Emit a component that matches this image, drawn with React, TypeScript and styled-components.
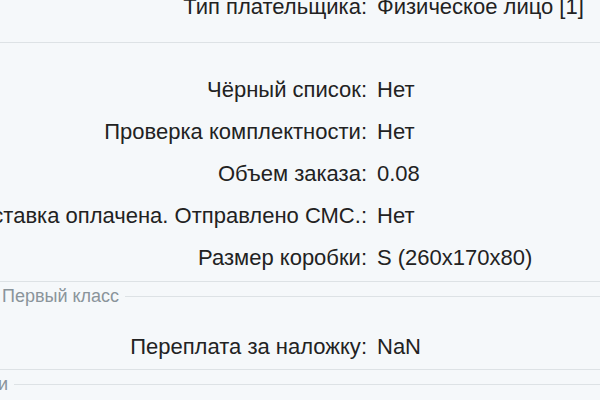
import React from 'react'
import styled, { createGlobalStyle } from 'styled-components'

const GlobalStyle = createGlobalStyle`
  html, body {
    margin: 0;
    padding: 0;
    background: #f5f8fa;
  }
  body {
    font-family: "Liberation Sans", Arial, sans-serif;
    color: #222;
  }
`

const Page = styled.div`
  width: 600px;
  height: 400px;
  overflow: hidden;
  background: #f5f8fa;
`

const Content = styled.div`
  margin-top: -14px;
`

const Section = styled.div<{ $top?: number; $bottom?: number }>`
  padding-top: ${(p) => p.$top ?? 0}px;
  padding-bottom: ${(p) => p.$bottom ?? 0}px;
  border-bottom: 1px solid #dde2e5;
`

const Row = styled.div`
  display: grid;
  grid-template-columns: 367px 1fr;
  column-gap: 10px;
  height: 42px;
  align-items: center;
  font-size: 22px;
`

const Label = styled.div`
  display: flex;
  justify-content: flex-end;
  white-space: nowrap;
  min-width: 0;
`

const Value = styled.div`
  white-space: nowrap;
`

const Legend = styled.div`
  display: flex;
  align-items: center;
  height: 28px;
  gap: 6px;
  font-size: 18px;
  color: #8a949a;
  white-space: nowrap;

  &::after {
    content: '';
    flex: 1;
    height: 1px;
    background: #dde2e5;
  }
`

const LegendText = styled.div<{ $clip?: number }>`
  display: flex;
  justify-content: flex-end;
  padding-left: 2px;
  ${(p) => (p.$clip ? `width: ${p.$clip}px; padding-left: 0;` : '')}
`

type Field = [string, string]

const Fields = ({ items }: { items: Field[] }) => (
  <>
    {items.map(([label, value]) => (
      <Row key={label}>
        <Label>{label}:</Label>
        <Value>{value}</Value>
      </Row>
    ))}
  </>
)

export default function App() {
  return (
    <Page>
      <GlobalStyle />
      <Content>
        <Section $bottom={14}>
          <Fields items={[['Тип плательщика', 'Физическое лицо [1]']]} />
        </Section>
        <Section $top={26} $bottom={2}>
          <Fields
            items={[
              ['Чёрный список', 'Нет'],
              ['Проверка комплектности', 'Нет'],
              ['Объем заказа', '0.08'],
              ['Доставка оплачена. Отправлено СМС.', 'Нет'],
              ['Размер коробки', 'S (260x170x80)'],
            ]}
          />
        </Section>
        <Legend>
          <LegendText>Первый класс</LegendText>
        </Legend>
        <Section $top={16} $bottom={1}>
          <Fields items={[['Переплата за наложку', 'NaN']]} />
        </Section>
        <Legend>
          <LegendText $clip={8}>Опции</LegendText>
        </Legend>
      </Content>
    </Page>
  )
}
